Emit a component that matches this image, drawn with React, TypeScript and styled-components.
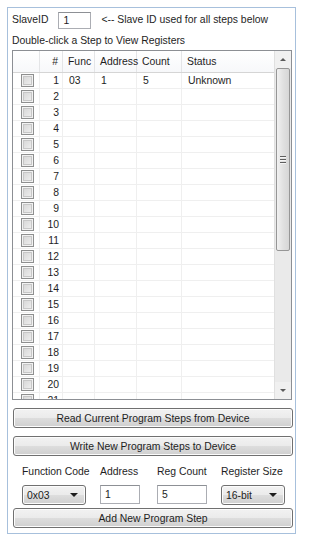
import React from "react";
import styled, {createGlobalStyle} from "styled-components";

const GlobalStyle = createGlobalStyle`
  html, body {
    margin: 0;
    padding: 0;
    background: #ffffff;
  }
  body {
    font-family: "Liberation Sans", Arial, sans-serif;
    font-size: 10.4px;
    color: #1e1e1e;
  }
`

const FrameDiv = styled.div`
  box-sizing: border-box;
  margin: 7px 0 0 7px;
  width: 289px;
  height: 527px;
  border: 1px solid #a7c0dc;
  padding: 3px 1px 0 4px;
  display: flex;
  flex-direction: column;
`

const SlaveRowDiv = styled.div`
  display: flex;
  align-items: center;
  height: 18px;
`

const LabelSpan = styled.span`
  white-space: nowrap;
  line-height: 14px;
`

const SlaveInput = styled.div`
  box-sizing: border-box;
  width: 33px;
  height: 17px;
  margin-left: 10px;
  margin-right: 10px;
  border: 1px solid #abadb3;
  border-top-color: #8d9095;
  padding: 1px 0 0 4px;
  line-height: 14px;
`

const HintDiv = styled.div`
  height: 15px;
  margin-top: 4px;
  line-height: 15px;
  white-space: nowrap;
`

const GridDiv = styled.div`
  box-sizing: border-box;
  margin-top: 2px;
  width: 280px;
  height: 350px;
  border: 1px solid #8c8f94;
  display: flex;
  overflow: hidden;
`

const TableDiv = styled.div`
  flex: 1;
  display: flex;
  flex-direction: column;
  overflow: hidden;
`

const columns = "27px 23px 32px 42px 45px 1fr"

const HeaderRowDiv = styled.div`
  display: grid;
  grid-template-columns: ${columns};
  height: 22px;
  flex-shrink: 0;
  background: linear-gradient(#ffffff, #f7f8fa);
  border-bottom: 1px solid #d5d5d5;
  box-sizing: border-box;
`

const HeaderCellDiv = styled.div<{ $align?: string }>`
  border-right: 1px solid #e4e5e7;
  display: flex;
  align-items: center;
  justify-content: ${({$align}) => $align === "right" ? "flex-end" : "flex-start"};
  padding: 0 4px 0 5px;
  white-space: nowrap;
  &:last-child {
    border-right: none;
  }
`

const BodyRowDiv = styled.div`
  display: grid;
  grid-template-columns: ${columns};
  height: 16px;
  flex-shrink: 0;
  border-bottom: 1px solid #efefef;
  box-sizing: border-box;
`

const BodyCellDiv = styled.div<{ $align?: string }>`
  border-right: 1px solid #efefef;
  display: flex;
  align-items: center;
  justify-content: ${({$align}) => $align === "right" ? "flex-end" : $align === "center" ? "center" : "flex-start"};
  padding: 0 3px 0 6px;
  white-space: nowrap;
  line-height: 14px;
  &:last-child {
    border-right: none;
  }
`

const CheckBoxDiv = styled.div`
  box-sizing: border-box;
  width: 13px;
  height: 13px;
  border: 1px solid #8e8f8f;
  background: linear-gradient(135deg, #d3d3d3, #f3f3f3);
  box-shadow: inset 0 0 0 1px #f2f2f2, inset 0 0 0 2px #c7c7c7;
`

const ScrollBarDiv = styled.div`
  width: 17px;
  flex-shrink: 0;
  background: #eaeaea;
  border-left: 1px solid #e0e0e0;
  display: flex;
  flex-direction: column;
  box-sizing: border-box;
`

const ScrollArrowDiv = styled.div`
  height: 17px;
  display: flex;
  align-items: center;
  justify-content: center;
  flex-shrink: 0;
  background: #f0f0f0;
`

const ArrowUpSpan = styled.span`
  width: 0;
  height: 0;
  border-left: 3px solid transparent;
  border-right: 3px solid transparent;
  border-bottom: 3px solid #5a5a5a;
`

const ArrowDownSpan = styled.span`
  width: 0;
  height: 0;
  border-left: 3px solid transparent;
  border-right: 3px solid transparent;
  border-top: 3px solid #5a5a5a;
`

const ScrollTrackDiv = styled.div`
  flex: 1;
  display: flex;
  flex-direction: column;
`

const ScrollThumbDiv = styled.div`
  box-sizing: border-box;
  margin: 0 1px;
  height: 183px;
  border: 1px solid #969696;
  border-radius: 2px;
  background: linear-gradient(to right, #f1f1f1, #e1e1e1 50%, #d6d6d6);
  display: flex;
  flex-direction: column;
  align-items: center;
  justify-content: center;
  gap: 1px;
`

const GripLineSpan = styled.span`
  width: 6px;
  height: 1px;
  background: #5e5e5e;
  border-bottom: 1px solid #f5f5f5;
`

const ActionButton = styled.div<{ $top?: number }>`
  box-sizing: border-box;
  margin-top: ${({$top}) => $top ?? 8}px;
  margin-left: 1px;
  width: 280px;
  height: 20px;
  border: 1px solid #707070;
  border-radius: 3px;
  background: linear-gradient(#f2f2f2 0%, #ebebeb 48%, #dddddd 52%, #cfcfcf 100%);
  box-shadow: inset 0 0 0 1px #fcfcfc;
  display: flex;
  align-items: center;
  justify-content: center;
  white-space: nowrap;
`

const ParamGridDiv = styled.div`
  display: grid;
  grid-template-columns: 78px 57px 64px 66px;
  padding-left: 10px;
  margin-top: 8px;
  row-gap: 6px;
`

const ParamLabelDiv = styled.div`
  height: 15px;
  line-height: 15px;
  white-space: nowrap;
`

const ComboDiv = styled.div`
  box-sizing: border-box;
  width: 64px;
  height: 20px;
  border: 1px solid #707070;
  border-radius: 3px;
  background: linear-gradient(#f2f2f2 0%, #ebebeb 48%, #dddddd 52%, #cfcfcf 100%);
  box-shadow: inset 0 0 0 1px #fcfcfc;
  display: flex;
  align-items: center;
  justify-content: space-between;
  padding: 0 7px 0 4px;
`

const ComboArrowSpan = styled.span`
  width: 0;
  height: 0;
  border-left: 4px solid transparent;
  border-right: 4px solid transparent;
  border-top: 4px solid #1e1e1e;
`

const TextBoxDiv = styled.div<{ $width: number }>`
  box-sizing: border-box;
  width: ${({$width}) => $width}px;
  height: 19px;
  border: 1px solid #abadb3;
  border-top-color: #8d9095;
  padding: 2px 0 0 4px;
  background: #ffffff;
  line-height: 14px;
`

type StepRow = {
    num: number;
    func: string;
    address: string;
    count: string;
    status: string;
}

const rows: StepRow[] = Array.from({length: 21}, (_, i) => (
    i === 0
        ? {num: 1, func: "03", address: "1", count: "5", status: "Unknown"}
        : {num: i + 1, func: "", address: "", count: "", status: ""}
))

const App = () => {
    return (
        <>
            <GlobalStyle/>
            <FrameDiv>
                <SlaveRowDiv>
                    <LabelSpan>SlaveID</LabelSpan>
                    <SlaveInput>1</SlaveInput>
                    <LabelSpan>&lt;-- Slave ID used for all steps below</LabelSpan>
                </SlaveRowDiv>
                <HintDiv>Double-click a Step to View Registers</HintDiv>
                <GridDiv>
                    <TableDiv>
                        <HeaderRowDiv>
                            <HeaderCellDiv/>
                            <HeaderCellDiv $align="right">#</HeaderCellDiv>
                            <HeaderCellDiv>Func</HeaderCellDiv>
                            <HeaderCellDiv>Address</HeaderCellDiv>
                            <HeaderCellDiv>Count</HeaderCellDiv>
                            <HeaderCellDiv>Status</HeaderCellDiv>
                        </HeaderRowDiv>
                        {
                            rows.map(row => (
                                <BodyRowDiv key={row.num}>
                                    <BodyCellDiv $align="center">
                                        <CheckBoxDiv/>
                                    </BodyCellDiv>
                                    <BodyCellDiv $align="right">{row.num}</BodyCellDiv>
                                    <BodyCellDiv>{row.func}</BodyCellDiv>
                                    <BodyCellDiv>{row.address}</BodyCellDiv>
                                    <BodyCellDiv>{row.count}</BodyCellDiv>
                                    <BodyCellDiv>{row.status}</BodyCellDiv>
                                </BodyRowDiv>
                            ))
                        }
                    </TableDiv>
                    <ScrollBarDiv>
                        <ScrollArrowDiv><ArrowUpSpan/></ScrollArrowDiv>
                        <ScrollTrackDiv>
                            <ScrollThumbDiv>
                                <GripLineSpan/>
                                <GripLineSpan/>
                                <GripLineSpan/>
                            </ScrollThumbDiv>
                        </ScrollTrackDiv>
                        <ScrollArrowDiv><ArrowDownSpan/></ScrollArrowDiv>
                    </ScrollBarDiv>
                </GridDiv>
                <ActionButton>Read Current Program Steps from Device</ActionButton>
                <ActionButton>Write New Program Steps to Device</ActionButton>
                <ParamGridDiv>
                    <ParamLabelDiv>Function Code</ParamLabelDiv>
                    <ParamLabelDiv>Address</ParamLabelDiv>
                    <ParamLabelDiv>Reg Count</ParamLabelDiv>
                    <ParamLabelDiv>Register Size</ParamLabelDiv>
                    <ComboDiv>0x03<ComboArrowSpan/></ComboDiv>
                    <TextBoxDiv $width={40}>1</TextBoxDiv>
                    <TextBoxDiv $width={50}>5</TextBoxDiv>
                    <ComboDiv>16-bit<ComboArrowSpan/></ComboDiv>
                </ParamGridDiv>
                <ActionButton $top={3}>Add New Program Step</ActionButton>
            </FrameDiv>
        </>
    )
}

export default App
